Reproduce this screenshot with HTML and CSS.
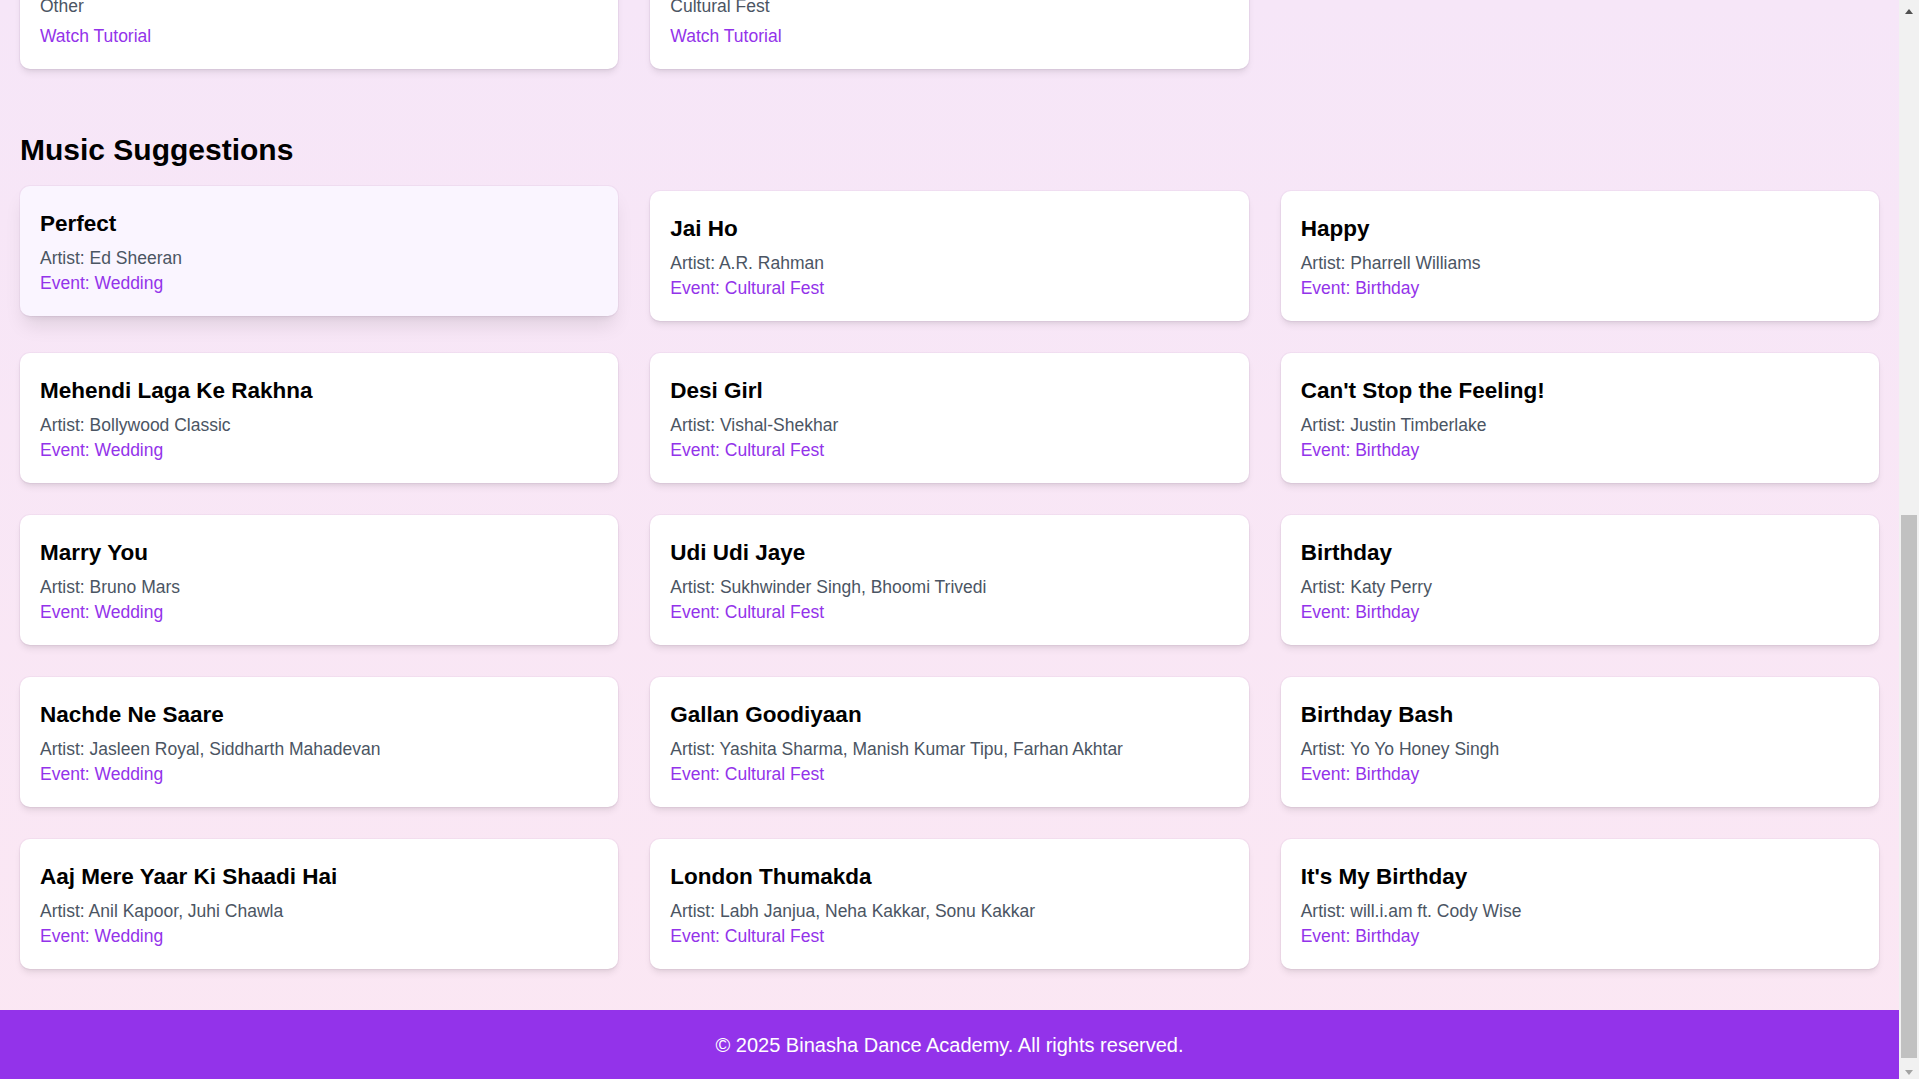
FILE: index.html
```html
<!DOCTYPE html>
<html lang="en">
<head>
<meta charset="utf-8">
<title>Binasha Dance Academy</title>
<link rel="stylesheet" href="styles.css">
</head>
<body>
<div class="page">
  <main class="container">
    <section class="section tutorials">
      <div class="grid">
        <div class="card"><p class="meta">Other</p><a class="link" href="#">Watch Tutorial</a></div>
        <div class="card"><p class="meta">Cultural Fest</p><a class="link" href="#">Watch Tutorial</a></div>
      </div>
    </section>

    <section class="section music">
      <h2 class="section-title">Music Suggestions</h2>
      <div class="grid">
        <div class="card song is-hover"><h3 class="card-title">Perfect</h3><p class="artist">Artist: Ed Sheeran</p><p class="event">Event: Wedding</p></div>
        <div class="card song"><h3 class="card-title">Jai Ho</h3><p class="artist">Artist: A.R. Rahman</p><p class="event">Event: Cultural Fest</p></div>
        <div class="card song"><h3 class="card-title">Happy</h3><p class="artist">Artist: Pharrell Williams</p><p class="event">Event: Birthday</p></div>

        <div class="card song"><h3 class="card-title">Mehendi Laga Ke Rakhna</h3><p class="artist">Artist: Bollywood Classic</p><p class="event">Event: Wedding</p></div>
        <div class="card song"><h3 class="card-title">Desi Girl</h3><p class="artist">Artist: Vishal-Shekhar</p><p class="event">Event: Cultural Fest</p></div>
        <div class="card song"><h3 class="card-title">Can't Stop the Feeling!</h3><p class="artist">Artist: Justin Timberlake</p><p class="event">Event: Birthday</p></div>

        <div class="card song"><h3 class="card-title">Marry You</h3><p class="artist">Artist: Bruno Mars</p><p class="event">Event: Wedding</p></div>
        <div class="card song"><h3 class="card-title">Udi Udi Jaye</h3><p class="artist">Artist: Sukhwinder Singh, Bhoomi Trivedi</p><p class="event">Event: Cultural Fest</p></div>
        <div class="card song"><h3 class="card-title">Birthday</h3><p class="artist">Artist: Katy Perry</p><p class="event">Event: Birthday</p></div>

        <div class="card song"><h3 class="card-title">Nachde Ne Saare</h3><p class="artist">Artist: Jasleen Royal, Siddharth Mahadevan</p><p class="event">Event: Wedding</p></div>
        <div class="card song"><h3 class="card-title">Gallan Goodiyaan</h3><p class="artist">Artist: Yashita Sharma, Manish Kumar Tipu, Farhan Akhtar</p><p class="event">Event: Cultural Fest</p></div>
        <div class="card song"><h3 class="card-title">Birthday Bash</h3><p class="artist">Artist: Yo Yo Honey Singh</p><p class="event">Event: Birthday</p></div>

        <div class="card song"><h3 class="card-title">Aaj Mere Yaar Ki Shaadi Hai</h3><p class="artist">Artist: Anil Kapoor, Juhi Chawla</p><p class="event">Event: Wedding</p></div>
        <div class="card song"><h3 class="card-title">London Thumakda</h3><p class="artist">Artist: Labh Janjua, Neha Kakkar, Sonu Kakkar</p><p class="event">Event: Cultural Fest</p></div>
        <div class="card song"><h3 class="card-title">It's My Birthday</h3><p class="artist">Artist: will.i.am ft. Cody Wise</p><p class="event">Event: Birthday</p></div>
      </div>
    </section>
  </main>
  <footer class="footer">© 2025 Binasha Dance Academy. All rights reserved.</footer>
</div>
<div class="scrollbar" aria-hidden="true">
  <div class="sb-button"><span class="arrow-up"></span></div>
  <div class="sb-track"><div class="sb-thumb"></div></div>
  <div class="sb-button"><span class="arrow-down"></span></div>
</div>
</body>
</html>
```

FILE: styles.css
```css
html,
body {
  height: 100%;
  overflow: hidden;
}

body {
  margin: 0;
  font-family: "Liberation Sans", Arial, sans-serif;
  color: #111;
  background: #f1f1f1;
}

.page {
  width: calc(100% - 20px);
  height: 100%;
  display: flex;
  flex-direction: column;
  overflow: hidden;
  background: linear-gradient(to bottom, #f6e6f8, #fbe7f3);
}

.container {
  flex: 1;
  padding: 0 20px;
}

.tutorials {
  margin-top: -26px;
  margin-bottom: 61px;
}

.section-title {
  margin: 0 0 21px;
  font-size: 30px;
  line-height: 40px;
  font-weight: bold;
  color: #000;
}

.grid {
  display: grid;
  grid-template-columns: repeat(3, 1fr);
  gap: 32px;
}

.card {
  background: #fff;
  border-radius: 10px;
  padding: 20px;
  box-shadow: 0 5px 7.5px -1.25px rgba(0, 0, 0, 0.08), 0 2.5px 5px -2.5px rgba(0, 0, 0, 0.08), 0 0 0 1px rgba(120, 60, 140, 0.05);
}

.card.is-hover {
  background: #faf5ff;
  transform: translateY(-5px);
  box-shadow: 0 12.5px 19px -4px rgba(0, 0, 0, 0.1), 0 5px 7.5px -5px rgba(0, 0, 0, 0.1), 0 0 0 1px rgba(120, 60, 140, 0.05);
}

.card-title {
  margin: 0 0 5px;
  font-size: 22.5px;
  line-height: 35px;
  font-weight: bold;
  color: #000;
}

.meta,
.artist {
  margin: 0;
  font-size: 17.5px;
  line-height: 25px;
  color: #4b5563;
}

.meta {
  margin-bottom: 5px;
}

.event {
  margin: 0;
  font-size: 17.5px;
  line-height: 25px;
  color: #9333ea;
}

.link {
  display: block;
  font-size: 17.5px;
  line-height: 25px;
  color: #9333ea;
  text-decoration: none;
}

.footer {
  background: #9333ea;
  color: #fff;
  text-align: center;
  font-size: 20px;
  line-height: 30px;
  padding: 20px 20px 19px;
}

/* browser scrollbar (page is scrolled to the bottom) */
.scrollbar {
  position: fixed;
  top: 0;
  right: 0;
  width: 20px;
  height: 100%;
  display: flex;
  flex-direction: column;
  background: #f1f1f1;
}

.sb-button {
  height: 17px;
  display: flex;
  align-items: center;
  justify-content: center;
}

.arrow-up {
  width: 0;
  height: 0;
  border-left: 4.5px solid transparent;
  border-right: 4.5px solid transparent;
  border-bottom: 5px solid #505050;
  margin-top: 6px;
}

.arrow-down {
  width: 0;
  height: 0;
  border-left: 4.5px solid transparent;
  border-right: 4.5px solid transparent;
  border-top: 5px solid #a3a3a3;
  margin-top: 3px;
}

.sb-track {
  flex: 1;
  display: flex;
  flex-direction: column;
  padding: 0 2px 4px;
}

.sb-thumb {
  margin-top: auto;
  height: 543px;
  background: #c1c1c1;
}
```
